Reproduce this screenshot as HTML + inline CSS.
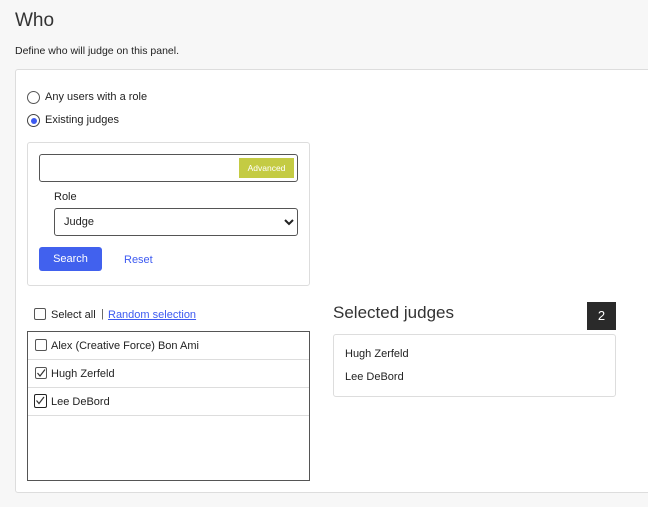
<!DOCTYPE html>
<html><head><style>
*{margin:0;padding:0;box-sizing:border-box}
body{width:648px;height:507px;background:#f7f7f7;font-family:"Liberation Sans",sans-serif;color:#222;position:relative;overflow:hidden;font-size:11px}
.a{position:absolute}
.radio{width:13px;height:13px;border:1px solid #555;border-radius:50%;background:#fff}
.cb{width:12px;height:12px;border:1px solid #555;border-radius:2px;background:#fff}
.row{position:absolute;left:0;width:281px;height:28px;border-bottom:1px solid #ddd}
</style></head><body>
<div class="a" style="left:15px;top:10px;font-size:19px;font-weight:300;color:#333">Who</div>
<div class="a" style="left:15px;top:45px;font-size:10.5px">Define who will judge on this panel.</div>
<div class="a" style="left:15px;top:69px;width:660px;height:424px;background:#fff;border:1px solid #ddd;border-radius:3px"></div>
<div class="a radio" style="left:27px;top:91px"></div>
<div class="a" style="left:45px;top:91px">Any users with a role</div>
<div class="a radio" style="left:27px;top:114px;border-color:#444"><div class="a" style="left:2.5px;top:2.5px;width:6px;height:6px;border-radius:50%;background:#3d5af1"></div></div>
<div class="a" style="left:45px;top:114px">Existing judges</div>
<div class="a" style="left:27px;top:142px;width:283px;height:144px;border:1px solid #ddd;border-radius:3px;background:#fff"></div>
<div class="a" style="left:39px;top:154px;width:259px;height:28px;border:1px solid #555;border-radius:3px"></div>
<div class="a" style="left:239px;top:158px;width:55px;height:20px;background:#c4cb43;color:#fff;font-size:8.5px;line-height:20px;text-align:center">Advanced</div>
<div class="a" style="left:54px;top:191px">Role</div>
<div class="a" style="left:54px;top:208px;width:244px;height:28px;border:1px solid #555;border-radius:3px;padding-left:9px;line-height:27px">Judge</div>
<svg class="a" style="left:284px;top:218px" width="10" height="8"><path d="M1 2 L5 6 L9 2" stroke="#222" stroke-width="2" fill="none"/></svg>
<div class="a" style="left:39px;top:247px;width:63px;height:24px;background:#4161ee;border-radius:3px;color:#fff;text-align:center;line-height:25px">Search</div>
<div class="a" style="left:124px;top:254px;color:#3d5af1">Reset</div>
<div class="a cb" style="left:34px;top:308px"></div>
<div class="a" style="left:51px;top:309px">Select all</div>
<div class="a" style="left:101px;top:308px;color:#555">|</div>
<div class="a" style="left:108px;top:309px;color:#3d5af1;text-decoration:underline">Random selection</div>
<div class="a" style="left:27px;top:331px;width:283px;height:150px;border:1px solid #555;background:#fff">
<div class="row" style="top:0"><div class="a cb" style="left:7px;top:7px"></div><div class="a" style="left:23px;top:8px">Alex (Creative Force) Bon Ami</div></div>
<div class="row" style="top:28px"><div class="a cb" style="left:7px;top:7px"><svg class="a" style="left:0;top:0" width="10" height="10"><path d="M1.5 5 L4 8 L9 1.5" stroke="#333" stroke-width="1.2" fill="none"/></svg></div><div class="a" style="left:23px;top:8px">Hugh Zerfeld</div></div>
<div class="row" style="top:56px"><div class="a cb" style="left:6px;top:6px;width:13px;height:14px;border:1.5px solid #222"><svg class="a" style="left:0;top:0" width="10" height="11"><path d="M1.5 5.5 L4 8.5 L9 2" stroke="#333" stroke-width="1.2" fill="none"/></svg></div><div class="a" style="left:23px;top:8px">Lee DeBord</div></div>
</div>
<div class="a" style="left:333px;top:303px;font-size:17px;font-weight:300;color:#333">Selected judges</div>
<div class="a" style="left:587px;top:302px;width:29px;height:28px;background:#2a2a2a;color:#fff;font-size:13px;text-align:center;line-height:28px">2</div>
<div class="a" style="left:333px;top:334px;width:283px;height:63px;border:1px solid #ddd;border-radius:3px;background:#fff"></div>
<div class="a" style="left:345px;top:348px">Hugh Zerfeld</div>
<div class="a" style="left:345px;top:371px">Lee DeBord</div>
</body></html>
